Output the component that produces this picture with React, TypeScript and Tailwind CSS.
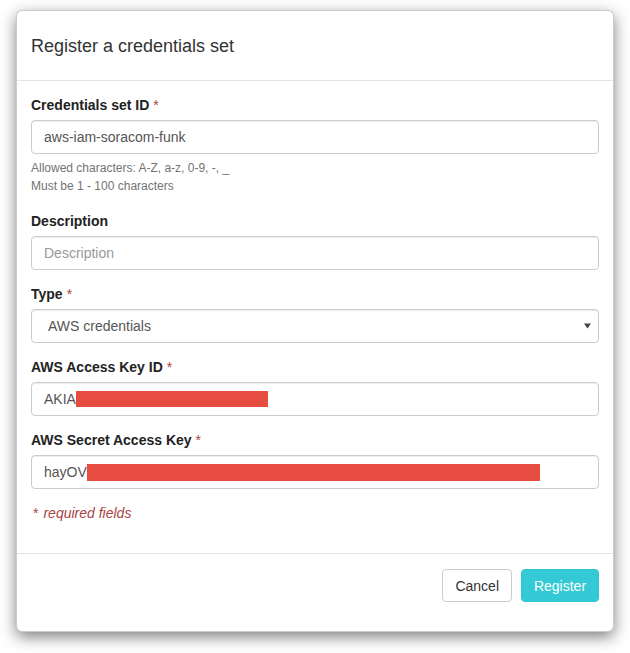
import type { ReactNode } from 'react'

const inputCls =
  'w-full h-[34px] rounded-[4px] border border-[#ccc] bg-white px-3 text-sm text-[#555] shadow-[inset_0_1px_1px_rgba(0,0,0,0.075)] outline-none'

function Label({ children, required }: { children: ReactNode; required?: boolean }) {
  return (
    <label className="block h-5 mb-[5px] text-sm leading-5 font-bold text-[#222]">
      {children}
      {required && <span className="ml-1 font-normal text-[#a94442]">*</span>}
    </label>
  )
}

// field whose secret part is blacked out after the first few characters
function MaskedField({ prefix, maskWidth, maskHeight }: { prefix: string; maskWidth: number; maskHeight: number }) {
  return (
    <div className={`${inputCls} flex items-center`}>
      <span>{prefix}</span>
      <span className="inline-block bg-[#e64c3f]" style={{ width: maskWidth, height: maskHeight }} />
    </div>
  )
}

export default function App() {
  return (
    <div
      className="min-h-screen bg-white pt-[10px] pl-[16px]"
      style={{ fontFamily: '"Liberation Sans", Arial, sans-serif' }}
    >
      <div className="flex flex-col w-[598px] h-[622px] rounded-[6px] border border-black/20 bg-white shadow-[0_5px_15px_rgba(0,0,0,0.5)]">
        {/* Header */}
        <div className="flex items-center h-[70px] px-[14px] border-b border-[#e5e5e5]">
          <h4 className="text-[18px] leading-[26px] text-[#333]">Register a credentials set</h4>
        </div>

        {/* Body */}
        <div className="flex-1 px-[14px] pt-[14px]">
          <div className="mb-[16px]">
            <Label required>Credentials set ID</Label>
            <input className={inputCls} defaultValue="aws-iam-soracom-funk" />
            <div className="mt-[5px] text-xs leading-[18px] text-[#737373]">
              <p>Allowed characters: A-Z, a-z, 0-9, -, _</p>
              <p>Must be 1 - 100 characters</p>
            </div>
          </div>

          <div className="mb-[14px]">
            <Label>Description</Label>
            <input className={`${inputCls} placeholder:text-[#999]`} placeholder="Description" />
          </div>

          <div className="mb-[14px]">
            <Label required>Type</Label>
            <div className={`${inputCls} flex items-center justify-between pl-4 pr-[6px]`}>
              <span>AWS credentials</span>
              <svg width="7" height="6" viewBox="0 0 7 6" className="mr-[1px]">
                <path d="M0 0.5h7L3.5 5.5z" fill="#444" />
              </svg>
            </div>
          </div>

          <div className="mb-[14px]">
            <Label required>AWS Access Key ID</Label>
            <MaskedField prefix="AKIA" maskWidth={192} maskHeight={16} />
          </div>

          <div className="mb-[14px]">
            <Label required>AWS Secret Access Key</Label>
            <MaskedField prefix="hayOV" maskWidth={453} maskHeight={17} />
          </div>

          <p className="text-sm leading-5 text-[#a94442]">
            <span className="ml-[2px]">*</span>
            <em className="ml-[5px]">required fields</em>
          </p>
        </div>

        {/* Footer */}
        <div className="flex justify-end gap-[9px] h-[78px] px-[14px] pt-[15px] border-t border-[#e5e5e5]">
          <button className="h-[33px] px-3 rounded-[4px] border border-[#ccc] bg-white text-sm text-[#333]">
            Cancel
          </button>
          <button className="h-[33px] w-[78px] rounded-[4px] border border-[#2fc4cf] bg-[#34cad5] text-sm text-white">
            Register
          </button>
        </div>
      </div>
    </div>
  )
}
